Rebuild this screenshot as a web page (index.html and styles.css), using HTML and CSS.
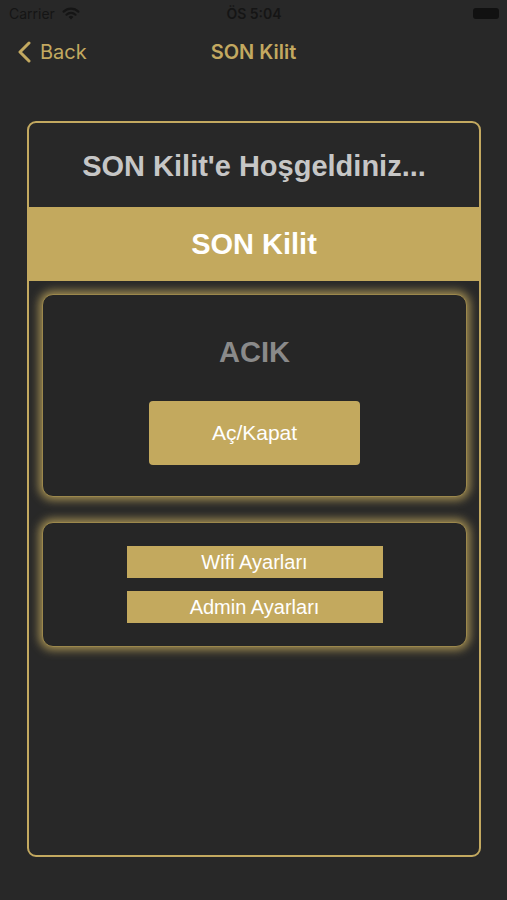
FILE: index.html
```html
<!DOCTYPE html>
<html lang="tr">
<head>
<meta charset="utf-8">
<title>SON Kilit</title>
<link rel="stylesheet" href="styles.css">
</head>
<body>
<div class="status">
  <div class="status-left">
    <span>Carrier</span>
    <svg class="wifi" width="18" height="13" viewBox="0 0 18 13">
      <path d="M9 12.5 L6.6 9.9 A3.6 3.6 0 0 1 11.4 9.9 Z" fill="#151515"/>
      <path d="M4.5 7.7 A6.5 6.5 0 0 1 13.5 7.7" stroke="#151515" stroke-width="2.2" fill="none" stroke-linecap="round"/>
      <path d="M1.6 4.6 A10.5 10.5 0 0 1 16.4 4.6" stroke="#151515" stroke-width="2.2" fill="none" stroke-linecap="round"/>
    </svg>
  </div>
  <div class="status-time">ÖS 5:04</div>
  <div class="status-right"><span class="battery"></span></div>
</div>
<nav class="nav">
  <div class="back">
    <svg width="14" height="22" viewBox="0 0 14 22"><path d="M12 2 L3 11 L12 20" stroke="#c3a960" stroke-width="3" fill="none" stroke-linecap="round" stroke-linejoin="round"/></svg>
    <span>Back</span>
  </div>
  <div class="nav-title">SON Kilit</div>
</nav>
<main class="card">
  <div class="welcome">SON Kilit'e Hoşgeldiniz...</div>
  <div class="band">SON Kilit</div>
  <section class="panel panel-lock">
    <div class="state">ACIK</div>
    <button class="toggle">Aç/Kapat</button>
  </section>
  <section class="panel panel-settings">
    <button class="flat">Wifi Ayarları</button>
    <button class="flat">Admin Ayarları</button>
  </section>
</main>
</body>
</html>
```
FILE: styles.css
```css
* { box-sizing: border-box; }
html, body { margin: 0; padding: 0; }
body {
  width: 507px;
  height: 900px;
  background: #282828;
  font-family: "Liberation Sans", Arial, sans-serif;
  overflow: hidden;
}
.status {
  height: 26px;
  display: flex;
  align-items: center;
  justify-content: space-between;
  padding: 0 8px 0 9px;
  color: #151515;
  font-family: Inter, "Liberation Sans", sans-serif;
  font-size: 14px;
  position: relative;
}
.status-left { display: flex; align-items: center; gap: 7px; width: 120px; }
.status-time {
  font-weight: 600;
  font-size: 14px;
}
.status-right { width: 120px; display: flex; justify-content: flex-end; }
.battery {
  display: block;
  width: 26px;
  height: 11px;
  border-radius: 3px;
  background: #111;
}
.nav {
  height: 52px;
  display: flex;
  align-items: center;
  position: relative;
}
.back {
  display: flex;
  align-items: center;
  gap: 9px;
  padding-left: 17px;
  color: #c3a960;
  font-family: Inter, "Liberation Sans", sans-serif;
  font-size: 20px;
}
.nav-title {
  position: absolute;
  left: 0; right: 0;
  text-align: center;
  color: #c3a960;
  font-family: Inter, "Liberation Sans", sans-serif;
  font-weight: 600;
  font-size: 20px;
  pointer-events: none;
}
.card {
  margin: 43px 0 0 27px;
  width: 454px;
  height: 736px;
  border: 2px solid #c3a960;
  border-radius: 9px;
  display: flex;
  flex-direction: column;
  align-items: stretch;
}
.welcome {
  height: 84px;
  display: flex;
  align-items: center;
  justify-content: center;
  padding-top: 2px;
  color: #c6c6c6;
  font-weight: bold;
  font-size: 29px;
}
.band {
  height: 74px;
  background: #c3a95e;
  display: flex;
  align-items: center;
  justify-content: center;
  color: #fff;
  font-weight: bold;
  font-size: 29px;
}
.panel {
  margin: 13px 12px 0 13px;
  background: #262626;
  border: 1px solid #9c884c;
  border-radius: 11px;
  box-shadow: 0 0 10px 3px rgba(195, 169, 94, 0.8);
  display: flex;
  flex-direction: column;
  align-items: center;
}
.panel-lock {
  height: 203px;
  padding-top: 39px;
}
.state {
  height: 36px;
  line-height: 36px;
  color: #8a8a8a;
  font-weight: bold;
  font-size: 29px;
}
.toggle {
  margin-top: 31px;
  width: 211px;
  height: 64px;
  border: none;
  border-radius: 4px;
  background: #c3a95e;
  color: #fff;
  font-family: "Liberation Sans", Arial, sans-serif;
  font-size: 21px;
  padding: 0;
}
.panel-settings {
  margin-top: 25px;
  height: 125px;
  padding-top: 23px;
  gap: 13px;
}
.flat {
  width: 256px;
  height: 32px;
  border: none;
  border-radius: 0;
  background: #c3a95e;
  color: #fff;
  font-family: "Liberation Sans", Arial, sans-serif;
  font-size: 20px;
  padding: 0;
}
```
